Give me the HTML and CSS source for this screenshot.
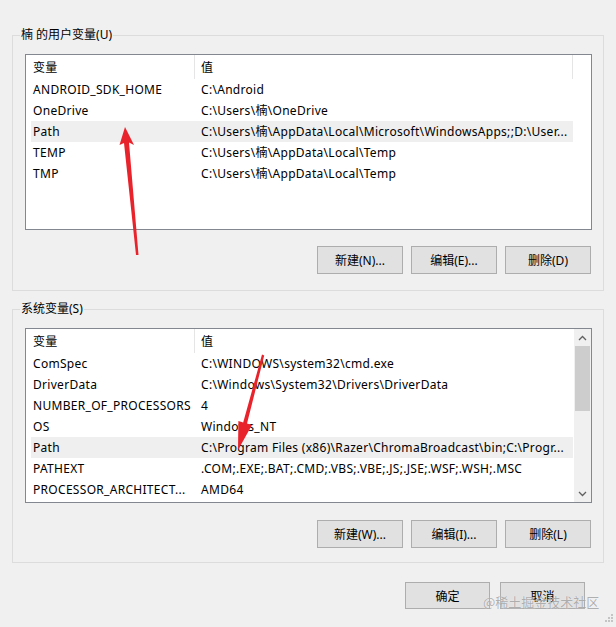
FILE: index.html
```html
<!DOCTYPE html>
<html lang="zh-CN">
<head>
<meta charset="utf-8">
<title>环境变量</title>
<link rel="stylesheet" href="styles.css">
</head>
<body>
<div class="dialog">
  <fieldset class="group group-user">
    <legend>楠 的用户变量(U)</legend>
    <div class="list list-user">
      <div class="list-body">
        <div class="row head"><span class="c1">变量</span><span class="c2 end">值</span></div>
        <div class="row"><span class="c1">ANDROID_SDK_HOME</span><span class="c2">C:\Android</span></div>
        <div class="row"><span class="c1">OneDrive</span><span class="c2">C:\Users\楠\OneDrive</span></div>
        <div class="row sel"><span class="c1">Path</span><span class="c2">C:\Users\楠\AppData\Local\Microsoft\WindowsApps;;D:\User...</span></div>
        <div class="row"><span class="c1">TEMP</span><span class="c2">C:\Users\楠\AppData\Local\Temp</span></div>
        <div class="row"><span class="c1">TMP</span><span class="c2">C:\Users\楠\AppData\Local\Temp</span></div>
      </div>
      <div class="sb-space"></div>
    </div>
    <div class="btns">
      <button class="btn">新建(N)...</button>
      <button class="btn">编辑(E)...</button>
      <button class="btn">删除(D)</button>
    </div>
  </fieldset>

  <fieldset class="group group-sys">
    <legend>系统变量(S)</legend>
    <div class="list list-sys">
      <div class="list-body">
        <div class="row head"><span class="c1">变量</span><span class="c2">值</span></div>
        <div class="row"><span class="c1">ComSpec</span><span class="c2">C:\WINDOWS\system32\cmd.exe</span></div>
        <div class="row"><span class="c1">DriverData</span><span class="c2">C:\Windows\System32\Drivers\DriverData</span></div>
        <div class="row"><span class="c1">NUMBER_OF_PROCESSORS</span><span class="c2">4</span></div>
        <div class="row"><span class="c1">OS</span><span class="c2">Windows_NT</span></div>
        <div class="row sel"><span class="c1">Path</span><span class="c2">C:\Program Files (x86)\Razer\ChromaBroadcast\bin;C:\Progr...</span></div>
        <div class="row"><span class="c1">PATHEXT</span><span class="c2">.COM;.EXE;.BAT;.CMD;.VBS;.VBE;.JS;.JSE;.WSF;.WSH;.MSC</span></div>
        <div class="row"><span class="c1">PROCESSOR_ARCHITECT...</span><span class="c2">AMD64</span></div>
      </div>
      <div class="scrollbar">
        <div class="sb-btn"><svg width="9" height="6" viewBox="0 0 9 6"><path d="M1 5 L4.5 1.5 L8 5" fill="none" stroke="#606060" stroke-width="1.3"/></svg></div>
        <div class="sb-thumb"></div>
        <div class="sb-track"></div>
        <div class="sb-btn"><svg width="9" height="6" viewBox="0 0 9 6"><path d="M1 1 L4.5 4.5 L8 1" fill="none" stroke="#606060" stroke-width="1.3"/></svg></div>
      </div>
    </div>
    <div class="btns btns-sys">
      <button class="btn">新建(W)...</button>
      <button class="btn">编辑(I)...</button>
      <button class="btn">删除(L)</button>
    </div>
  </fieldset>

  <div class="footer">
    <button class="btn btn-foot">确定</button>
    <button class="btn btn-foot">取消</button>
  </div>

  <div class="watermark">@稀土掘金技术社区</div>

  <svg class="grip" width="12" height="12" viewBox="0 0 12 12">
    <rect x="9" y="1" width="2" height="2" fill="#c4c4c4"/>
    <rect x="6" y="4" width="2" height="2" fill="#c4c4c4"/>
    <rect x="9" y="4" width="2" height="2" fill="#c4c4c4"/>
    <rect x="3" y="7" width="2" height="2" fill="#c4c4c4"/>
    <rect x="6" y="7" width="2" height="2" fill="#c4c4c4"/>
    <rect x="9" y="7" width="2" height="2" fill="#c4c4c4"/>
  </svg>

  <svg class="annot" width="616" height="627" viewBox="0 0 616 627">
    <polygon fill="#e8232c" points="125,127 134,145 129,142.5 138.5,255 136,255 124,143 119.5,145"/>
    <polygon fill="#e8232c" points="238,450 238.4,421 243.2,422.5 262,354.6 264.2,355.4 247,423.6 252,425"/>
  </svg>
</div>
</body>
</html>
```

FILE: styles.css
```css
html, body {
  margin: 0;
  padding: 0;
  background: #f0f0f0;
}

.dialog {
  position: relative;
  width: 616px;
  height: 627px;
  box-sizing: border-box;
  padding: 27px 12px 0 12px;
  font-family: "Noto Sans", "Noto Sans CJK SC", sans-serif;
  font-size: 12px;
  color: #000;
  overflow: hidden;
}

.group {
  margin: 0;
  border: 1px solid #dcdcdc;
  padding: 11px 11px 16px 12px;
  min-width: 0;
}

.group legend {
  padding: 0 1px;
  margin-left: -5px;
  line-height: 16px;
  height: 16px;
}

.group-sys {
  margin-top: 10px;
  padding-bottom: 14px;
}

.list {
  display: flex;
  border: 1px solid #828790;
  background: #fff;
  height: 176px;
  box-sizing: border-box;
  letter-spacing: 0.3px;
}

.list-sys {
  height: 175px;
}

.list-body {
  padding-left: 5px;
  width: 542px;
  flex: none;
}

.row {
  display: grid;
  grid-template-columns: 163px 379px;
  height: 21px;
  line-height: 21px;
  white-space: nowrap;
}

.row span {
  overflow: hidden;
  display: block;
}

.row .c1 {
  padding-left: 2px;
}

.row .c2 {
  padding-left: 7px;
}

.row.head {
  height: 24px;
  line-height: 25px;
}

.row.head .c2 {
  border-left: 1px solid #e5e5e5;
  padding-left: 6px;
}

.row.head .c2.end {
  border-right: 1px solid #e5e5e5;
}

.row.sel {
  background: #efefef;
}

.sb-space {
  width: 18px;
  flex: none;
}

.scrollbar {
  width: 17px;
  margin-left: 1px;
  flex: none;
  display: flex;
  flex-direction: column;
  background: #f0f0f0;
}

.sb-btn {
  height: 17px;
  display: flex;
  align-items: center;
  justify-content: center;
  flex: none;
}

.sb-thumb {
  height: 65px;
  margin: 0 1px;
  background: #cdcdcd;
  flex: none;
}

.sb-track {
  flex: 1;
}

.btns {
  display: flex;
  justify-content: flex-end;
  gap: 8px;
  margin-top: 16px;
  padding-right: 1px;
}

.btns-sys {
  margin-top: 17px;
}

.btn {
  width: 86px;
  height: 28px;
  margin: 0;
  padding: 0;
  background: #e1e1e1;
  border: 1px solid #adadad;
  font-family: "Noto Sans", "Noto Sans CJK SC", sans-serif;
  font-size: 12px;
  color: #000;
}

.footer {
  display: flex;
  justify-content: flex-end;
  gap: 10px;
  margin-top: 19px;
  padding-right: 19px;
}

.btn-foot {
  width: 85px;
  height: 27px;
}

.watermark {
  position: absolute;
  left: 483px;
  top: 593px;
  font-family: "Noto Sans CJK SC", sans-serif;
  font-size: 13px;
  line-height: 18px;
  color: rgba(150, 150, 150, 0.75);
  text-shadow: 0 0 1px rgba(255, 255, 255, 0.8);
}

.grip {
  position: absolute;
  right: 2px;
  bottom: 2px;
}

.annot {
  position: absolute;
  left: 0;
  top: 0;
  pointer-events: none;
}
```
